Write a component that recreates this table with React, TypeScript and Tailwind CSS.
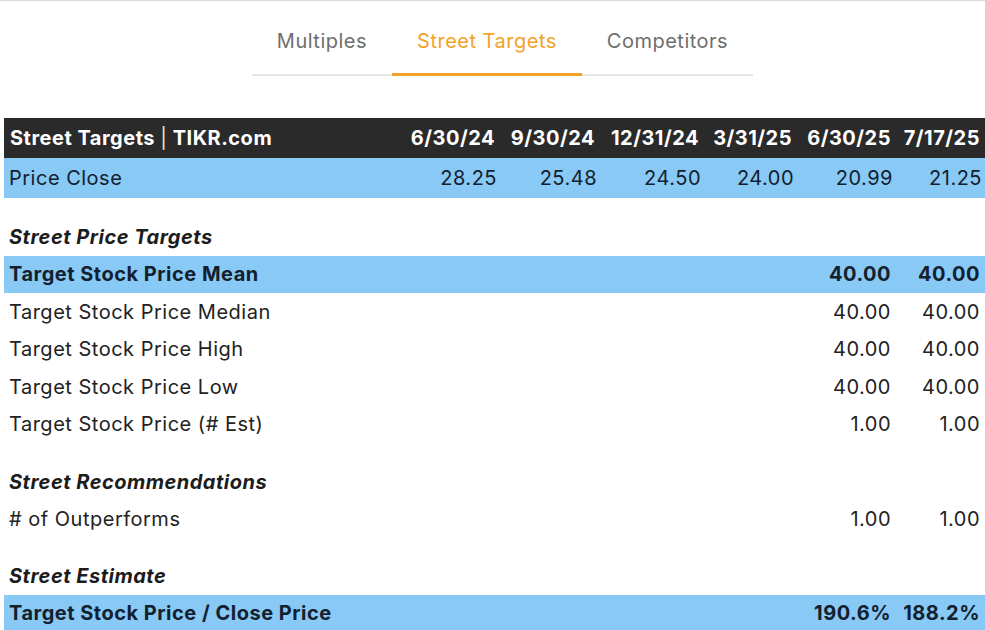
import React from "react"

const cols = ["6/30/24", "9/30/24", "12/31/24", "3/31/25", "6/30/25", "7/17/25"]

type Row =
  | { kind: "section"; label: string }
  | { kind: "spacer"; h?: string }
  | { kind: "data"; label: string; values: string[]; highlight?: boolean }

const rows: Row[] = [
  { kind: "spacer" },
  { kind: "section", label: "Street Price Targets" },
  { kind: "data", label: "Target Stock Price Mean", values: ["", "", "", "", "40.00", "40.00"], highlight: true },
  { kind: "data", label: "Target Stock Price Median", values: ["", "", "", "", "40.00", "40.00"] },
  { kind: "data", label: "Target Stock Price High", values: ["", "", "", "", "40.00", "40.00"] },
  { kind: "data", label: "Target Stock Price Low", values: ["", "", "", "", "40.00", "40.00"] },
  { kind: "data", label: "Target Stock Price (# Est)", values: ["", "", "", "", "1.00", "1.00"] },
  { kind: "spacer" },
  { kind: "section", label: "Street Recommendations" },
  { kind: "data", label: "# of Outperforms", values: ["", "", "", "", "1.00", "1.00"] },
  { kind: "spacer", h: "h-[19px]" },
  { kind: "section", label: "Street Estimate" },
  { kind: "data", label: "Target Stock Price / Close Price", values: ["", "", "", "", "190.6%", "188.2%"], highlight: true },
]

const grid = "grid grid-cols-[1fr_100px_100px_104px_93px_99px_89px]"

export default function App() {
  return (
    <div className="w-[985px] h-[630px] overflow-hidden bg-white border-t border-[#d9d9d9] font-['Inter',sans-serif] tracking-[0.5px]">
      {/* Tabs */}
      <div className="flex justify-center pt-[25px]">
        <div className="flex border-b-2 border-[#e6e6e6] ml-[20px] text-[20px] leading-[30px]">
          <div className="px-[25px] pb-[17px] text-[#6e6e6e]">Multiples</div>
          <div className="px-[25px] pb-[17px] text-[#f2a225] -mb-[2px] border-b-[3px] border-[#f2a225]">Street Targets</div>
          <div className="px-[25px] pb-[17px] text-[#6e6e6e]">Competitors</div>
        </div>
      </div>

      {/* Table */}
      <div className="ml-[4px] mt-[42px] text-[20px]">
        <div className={`${grid} h-[40px] items-center bg-[#2a2a2a] text-white font-bold`}>
          <div className="pl-[6px]">
            Street Targets <span className="text-[#f3e6b5] font-normal">|</span> TIKR.com
          </div>
          {cols.map((c) => (
            <div key={c} className="text-right pr-[5px]">{c}</div>
          ))}
        </div>
        <div className={`${grid} h-[40px] items-center bg-[#88c9f5] text-[#13202e]`}>
          <div className="pl-[5px]">Price Close</div>
          {["28.25", "25.48", "24.50", "24.00", "20.99", "21.25"].map((v, i) => (
            <div key={i} className="text-right pr-[3px]">{v}</div>
          ))}
        </div>

        {rows.map((r, i) => {
          if (r.kind === "spacer") return <div key={i} className={r.h ?? "h-[20px]"} />
          if (r.kind === "section")
            return (
              <div key={i} className="h-[37.5px] flex items-center pl-[5px] font-bold italic text-[#1c1c1c]">
                {r.label}
              </div>
            )
          return (
            <div
              key={i}
              className={`${grid} h-[37.5px] items-center ${
                r.highlight ? "bg-[#88c9f5] text-[#13202e] font-bold" : "text-[#222222]"
              }`}
            >
              <div className="pl-[5px]">{r.label}</div>
              {r.values.map((v, j) => (
                <div key={j} className="text-right pr-[5px]">{v}</div>
              ))}
            </div>
          )
        })}
      </div>
    </div>
  )
}
